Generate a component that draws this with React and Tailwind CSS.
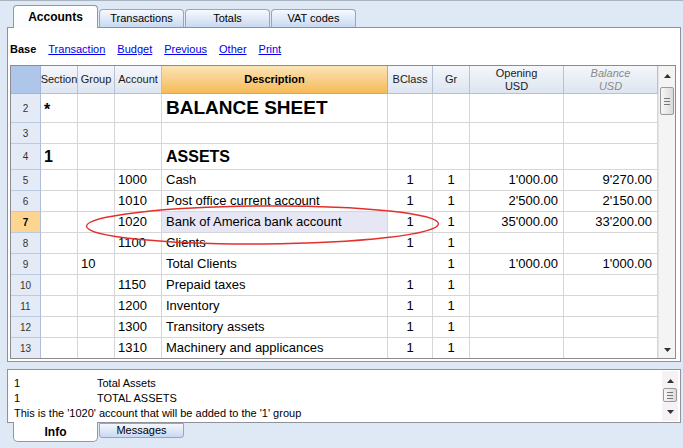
const cols = 'grid grid-cols-[30px_37px_37px_47px_226px_45px_37px_94px_94px]';

const rows = [
  { n: 2, h: 'h-[29px]', section: '*', desc: 'BALANCE SHEET', size: 'big' },
  { n: 3, h: 'h-[21px]' },
  { n: 4, h: 'h-[26px]', section: '1', desc: 'ASSETS', size: 'mid' },
  { n: 5, acc: '1000', desc: 'Cash', bc: '1', gr: '1', op: "1'000.00", bal: "9'270.00" },
  { n: 6, acc: '1010', desc: 'Post office current account', bc: '1', gr: '1', op: "2'500.00", bal: "2'150.00" },
  { n: 7, acc: '1020', desc: 'Bank of America bank account', bc: '1', gr: '1', op: "35'000.00", bal: "33'200.00", sel: true },
  { n: 8, acc: '1100', desc: 'Clients', bc: '1', gr: '1' },
  { n: 9, group: '10', desc: 'Total Clients', gr: '1', op: "1'000.00", bal: "1'000.00" },
  { n: 10, acc: '1150', desc: 'Prepaid taxes', bc: '1', gr: '1' },
  { n: 11, acc: '1200', desc: 'Inventory', bc: '1', gr: '1' },
  { n: 12, acc: '1300', desc: 'Transitory assets', bc: '1', gr: '1' },
  { n: 13, h: 'h-[20px]', acc: '1310', desc: 'Machinery and applicances', bc: '1', gr: '1', last: true },
];

function Row({ r }) {
  const b = r.last ? 'border-r border-[#d6d6d6]' : 'border-r border-b border-[#d6d6d6]';
  const cell = `${b} flex items-center overflow-hidden whitespace-nowrap`;
  const big = r.size === 'big' ? 'text-[19px] font-bold' : r.size === 'mid' ? 'text-[16px] font-bold' : '';
  return (
    <div className={`${cols} ${r.h || 'h-[21px]'} text-[13px] text-black`}>
      <div
        className={`flex items-center justify-center border-r border-[#aebfd6] ${r.last ? '' : 'border-b border-b-[#b9cbe3]'} text-[10px] text-[#333] ${
          r.sel ? 'bg-[#fdd590] font-bold text-black' : 'bg-[#e4ebf6]'
        }`}
      >
        {r.n}
      </div>
      <div className={`${cell} pl-[3px] ${r.size === 'big' ? 'text-[16px] font-bold items-start pt-[4px]' : big}`}>{r.section}</div>
      <div className={`${cell} pl-[3px]`}>{r.group}</div>
      <div className={`${cell} pl-[3px]`}>{r.acc}</div>
      <div className={`${cell} pl-[4px] ${big} ${r.sel ? 'bg-[#e6e6f5]' : ''}`}>{r.desc}</div>
      <div className={`${cell} justify-center`}>{r.bc}</div>
      <div className={`${cell} justify-center`}>{r.gr}</div>
      <div className={`${cell} justify-end pr-[5px]`}>{r.op}</div>
      <div className={`${cell} justify-end pr-[5px]`}>{r.bal}</div>
    </div>
  );
}

function Header() {
  const h = 'flex flex-col items-center justify-center border-r border-b border-[#b4c2d4] bg-gradient-to-b from-[#f4f7fb] to-[#dde5f0] text-[11px] leading-[13px] text-[#1a1a1a]';
  return (
    <div className={`${cols} h-[28px]`}>
      <div className="border-r border-b border-[#9fb6d8] bg-[#adc6ea]" />
      <div className={h}>Section</div>
      <div className={h}>Group</div>
      <div className={h}>Account</div>
      <div className="flex items-center justify-center border-r border-b border-[#e2a44c] bg-gradient-to-b from-[#fbe4b4] to-[#f5ba55] text-[11px] font-bold">
        Description
      </div>
      <div className={h}>BClass</div>
      <div className={h}>Gr</div>
      <div className={h}>
        <span>Opening</span>
        <span>USD</span>
      </div>
      <div className={`${h} italic !text-[#8a8a8a]`}>
        <span>Balance</span>
        <span>USD</span>
      </div>
    </div>
  );
}

function UpArrow() {
  return (
    <svg width="7" height="4" viewBox="0 0 7 4">
      <path d="M0 4 L3.5 0 L7 4 Z" fill="#333" />
    </svg>
  );
}

function DownArrow() {
  return (
    <svg width="7" height="4" viewBox="0 0 7 4">
      <path d="M0 0 L7 0 L3.5 4 Z" fill="#333" />
    </svg>
  );
}

function Thumb({ h }) {
  return (
    <div className={`mx-[1px] ${h} rounded-[2px] border border-[#9a9a9a] bg-gradient-to-r from-[#f7f7f7] via-[#e9e9e9] to-[#d9d9d9] flex flex-col items-center justify-center gap-[2px]`}>
      <div className="w-[6px] h-px bg-[#777]" />
      <div className="w-[6px] h-px bg-[#777]" />
      <div className="w-[6px] h-px bg-[#777]" />
    </div>
  );
}

function TopTab({ label, active }) {
  if (active) {
    return (
      <div className="relative z-10 -mb-px flex h-[23px] w-[85px] items-center justify-center rounded-t-[4px] border border-b-0 border-[#8e98a6] bg-gradient-to-b from-white to-[#fbfcfe] text-[12px] font-bold text-black">
        {label}
      </div>
    );
  }
  return (
    <div className="flex h-[18px] w-[85px] items-center justify-center rounded-t-[4px] border border-b-0 border-[#97a6bc] bg-gradient-to-b from-[#f7f9fd] to-[#c9d9f2] text-[11px] text-black">
      {label}
    </div>
  );
}

export default function App() {
  return (
    <div className="relative flex h-[448px] w-[683px] flex-col overflow-hidden border-t border-[#a9b3c0] bg-[#dfe9f5] font-['Liberation_Sans',Arial,sans-serif] text-black">
      <div className="flex h-[26px] items-end gap-[1px] pl-[13px]">
        <TopTab label="Accounts" active />
        <TopTab label="Transactions" />
        <TopTab label="Totals" />
        <TopTab label="VAT codes" />
      </div>

      <div className="ml-[7px] h-[335px] w-[674px] border border-[#8f9299] bg-white">
        <div className="flex h-[37px] items-start gap-[12px] pl-[2px] pt-[15px] text-[11px] leading-[13px]">
          <span className="font-bold">Base</span>
          <span className="text-[#0000ee] underline">Transaction</span>
          <span className="text-[#0000ee] underline">Budget</span>
          <span className="text-[#0000ee] underline">Previous</span>
          <span className="text-[#0000ee] underline">Other</span>
          <span className="text-[#0000ee] underline">Print</span>
        </div>
        <div className="ml-[2px] flex h-[294px] w-[666px] border border-[#8c8c8c]">
          <div className="flex w-[647px] flex-col">
            <Header />
            {rows.map((r) => (
              <Row key={r.n} r={r} />
            ))}
          </div>
          <div className="flex w-[17px] flex-col border-l border-[#e4e4e4] bg-[#f4f4f4]">
            <div className="flex h-[18px] items-center justify-center pt-[2px]">
              <UpArrow />
            </div>
            <div className="mt-[3px]">
              <Thumb h="h-[28px]" />
            </div>
            <div className="flex-1" />
            <div className="flex h-[14px] items-center justify-center pb-[3px]">
              <DownArrow />
            </div>
          </div>
        </div>
      </div>

      <div className="ml-[7px] mt-[7px] flex h-[54px] w-[674px] border border-[#8f9299] bg-white">
        <div className="flex-1 pl-[6px] pt-[6px] text-[11px] leading-[15px]">
          <div className="flex">
            <span className="w-[83px]">1</span>
            <span>Total Assets</span>
          </div>
          <div className="flex">
            <span className="w-[83px]">1</span>
            <span>TOTAL ASSETS</span>
          </div>
          <div>This is the '1020' account that will be added to the '1' group</div>
        </div>
        <div className="my-[1px] mr-[2px] flex w-[16px] flex-col bg-[#f5f1f5]">
          <div className="flex h-[17px] items-center justify-center pt-[2px]">
            <UpArrow />
          </div>
          <Thumb h="h-[14px]" />
          <div className="flex flex-1 items-center justify-center">
            <DownArrow />
          </div>
        </div>
      </div>

      <div className="relative z-10 -mt-px flex items-start gap-[1px] pl-[13px]">
        <div className="flex h-[20px] w-[85px] items-center justify-center rounded-b-[5px] border border-t-0 border-[#8e98a6] bg-white text-[12px] font-bold">
          Info
        </div>
        <div className="mt-px flex h-[15px] w-[85px] items-center justify-center rounded-b-[3px] border border-[#97a6bc] bg-gradient-to-b from-[#f4f7fd] to-[#c9d9f2] text-[11px]">
          Messages
        </div>
      </div>

      <svg className="pointer-events-none absolute left-0 top-0" width="683" height="448">
        <ellipse cx="262.5" cy="224" rx="176" ry="19" transform="rotate(-0.4 262 224)" fill="none" stroke="#e3302c" strokeWidth="1.4" />
      </svg>
    </div>
  );
}
